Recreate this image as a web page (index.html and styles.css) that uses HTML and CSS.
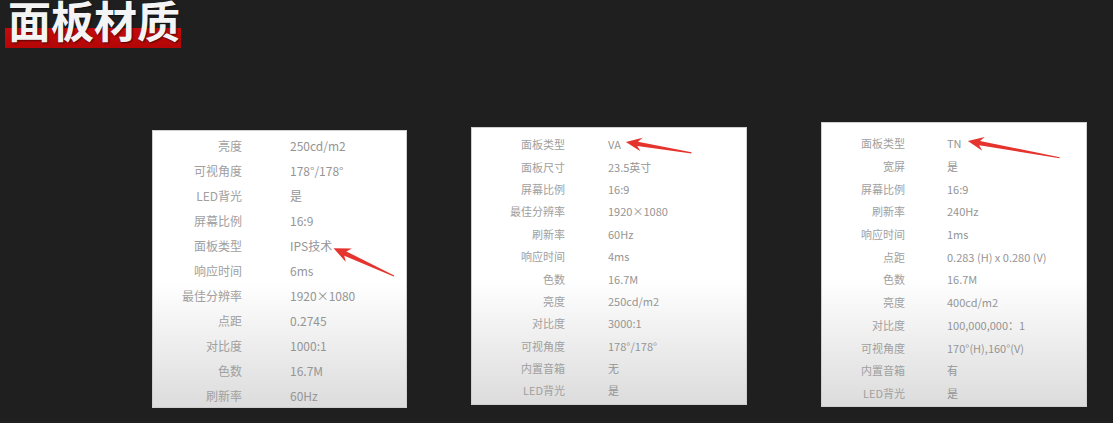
FILE: index.html
```html
<!DOCTYPE html>
<html lang="zh-CN">
<head>
    <meta charset="UTF-8" />
    <title>面板材质</title>
    <link rel="stylesheet" href="styles.css">
</head>
<body>
  <div class="header">
    <h1 class="title">面板材质</h1>
  </div>

  <div class="panels">
    <!-- IPS -->
    <div class="panel panel-ips">
      <div class="spec">
        <span>亮度</span><span>250cd/m2</span>
        <span>可视角度</span><span>178°/178°</span>
        <span>LED背光</span><span>是</span>
        <span>屏幕比例</span><span>16:9</span>
        <span>面板类型</span><span>IPS技术</span>
        <span>响应时间</span><span>6ms</span>
        <span>最佳分辨率</span><span>1920×1080</span>
        <span>点距</span><span>0.2745</span>
        <span>对比度</span><span>1000:1</span>
        <span>色数</span><span>16.7M</span>
        <span>刷新率</span><span>60Hz</span>
      </div>
      <svg class="arrow" viewBox="0 0 255 278">
        <g transform="translate(183 119) rotate(24.7)">
          <polygon points="0,0 17,-7.5 13,-2.4 67,-0.6 67,0.6 13,2.4 17,7.5" />
        </g>
      </svg>
    </div>

    <!-- VA -->
    <div class="panel panel-va">
      <div class="spec">
        <span>面板类型</span><span>VA</span>
        <span>面板尺寸</span><span>23.5英寸</span>
        <span>屏幕比例</span><span>16:9</span>
        <span>最佳分辨率</span><span>1920×1080</span>
        <span>刷新率</span><span>60Hz</span>
        <span>响应时间</span><span>4ms</span>
        <span>色数</span><span>16.7M</span>
        <span>亮度</span><span>250cd/m2</span>
        <span>对比度</span><span>3000:1</span>
        <span>可视角度</span><span>178°/178°</span>
        <span>内置音箱</span><span>无</span>
        <span>LED背光</span><span>是</span>
      </div>
      <svg class="arrow" viewBox="0 0 276 278">
        <g transform="translate(156 15) rotate(9.5)">
          <polygon points="0,0 16,-7 12,-2.2 67,-0.6 67,0.6 12,2.2 16,7" />
        </g>
      </svg>
    </div>

    <!-- TN -->
    <div class="panel panel-tn">
      <div class="spec">
        <span>面板类型</span><span>TN</span>
        <span>宽屏</span><span>是</span>
        <span>屏幕比例</span><span>16:9</span>
        <span>刷新率</span><span>240Hz</span>
        <span>响应时间</span><span>1ms</span>
        <span>点距</span><span>0.283 (H) x 0.280 (V)</span>
        <span>色数</span><span>16.7M</span>
        <span>亮度</span><span>400cd/m2</span>
        <span>对比度</span><span>100,000,000：1</span>
        <span>可视角度</span><span>170°(H),160°(V)</span>
        <span>内置音箱</span><span>有</span>
        <span>LED背光</span><span>是</span>
      </div>
      <svg class="arrow" viewBox="0 0 266 285">
        <g transform="translate(148 19) rotate(10.4)">
          <polygon points="0,0 16,-7 12,-2.2 94,-0.6 94,0.6 12,2.2 16,7" />
        </g>
      </svg>
    </div>
  </div>
</body>
</html>
```

FILE: styles.css
```css
body {
    margin: 0;
    width: 1113px;
    height: 423px;
    overflow: hidden;
    background: #1f1f1f;
    font-family: "Noto Sans CJK SC", "Noto Sans", sans-serif;
}

.header {
    padding-left: 5px;
    height: 48px;
}

.title {
    display: inline-block;
    box-sizing: border-box;
    margin: 0;
    padding: 0 1px 10px 3px;
    height: 48px;
    font-size: 43px;
    line-height: 38px;
    font-weight: 700;
    color: #f4f4f4;
    text-shadow: 1px 1px 2px rgba(0,0,0,0.6);
    background: linear-gradient(to bottom, transparent 28px, #c50b0b 28px, #b30606 48px);
}

.panels {
    display: flex;
    align-items: flex-start;
}

.panel {
    position: relative;
    box-sizing: border-box;
    border: 1px solid #cfcfcf;
    background: linear-gradient(to bottom, #ffffff 0%, #ffffff 55%, #dcdcdc 100%);
    color: #959595;
}

.spec {
    display: grid;
    align-items: center;
}

    .spec span:nth-child(odd) {
        text-align: right;
        color: #a0a0a0;
        white-space: nowrap;
    }

    .spec span:nth-child(even) {
        white-space: nowrap;
    }

.arrow {
    position: absolute;
    left: -1px;
    top: -1px;
    width: 100%;
    height: 100%;
    fill: #e5332e;
    overflow: visible;
}

/* IPS panel */
.panel-ips {
    margin: 82px 0 0 152px;
    width: 255px;
    height: 278px;
}

    .panel-ips .spec {
        padding-top: 2px;
        grid-template-columns: 89px auto;
        grid-auto-rows: 25px;
        column-gap: 48px;
        font-size: 12px;
    }

/* VA panel */
.panel-va {
    margin: 79px 0 0 64px;
    width: 276px;
    height: 278px;
}

    .panel-va .spec {
        padding-top: 5px;
        grid-template-columns: 93px auto;
        grid-auto-rows: 22.4px;
        column-gap: 43px;
        font-size: 11px;
    }

/* TN panel */
.panel-tn {
    margin: 74px 0 0 74px;
    width: 266px;
    height: 285px;
}

    .panel-tn .spec {
        padding-top: 9px;
        grid-template-columns: 83px auto;
        grid-auto-rows: 22.7px;
        column-gap: 42px;
        font-size: 11px;
    }
```
